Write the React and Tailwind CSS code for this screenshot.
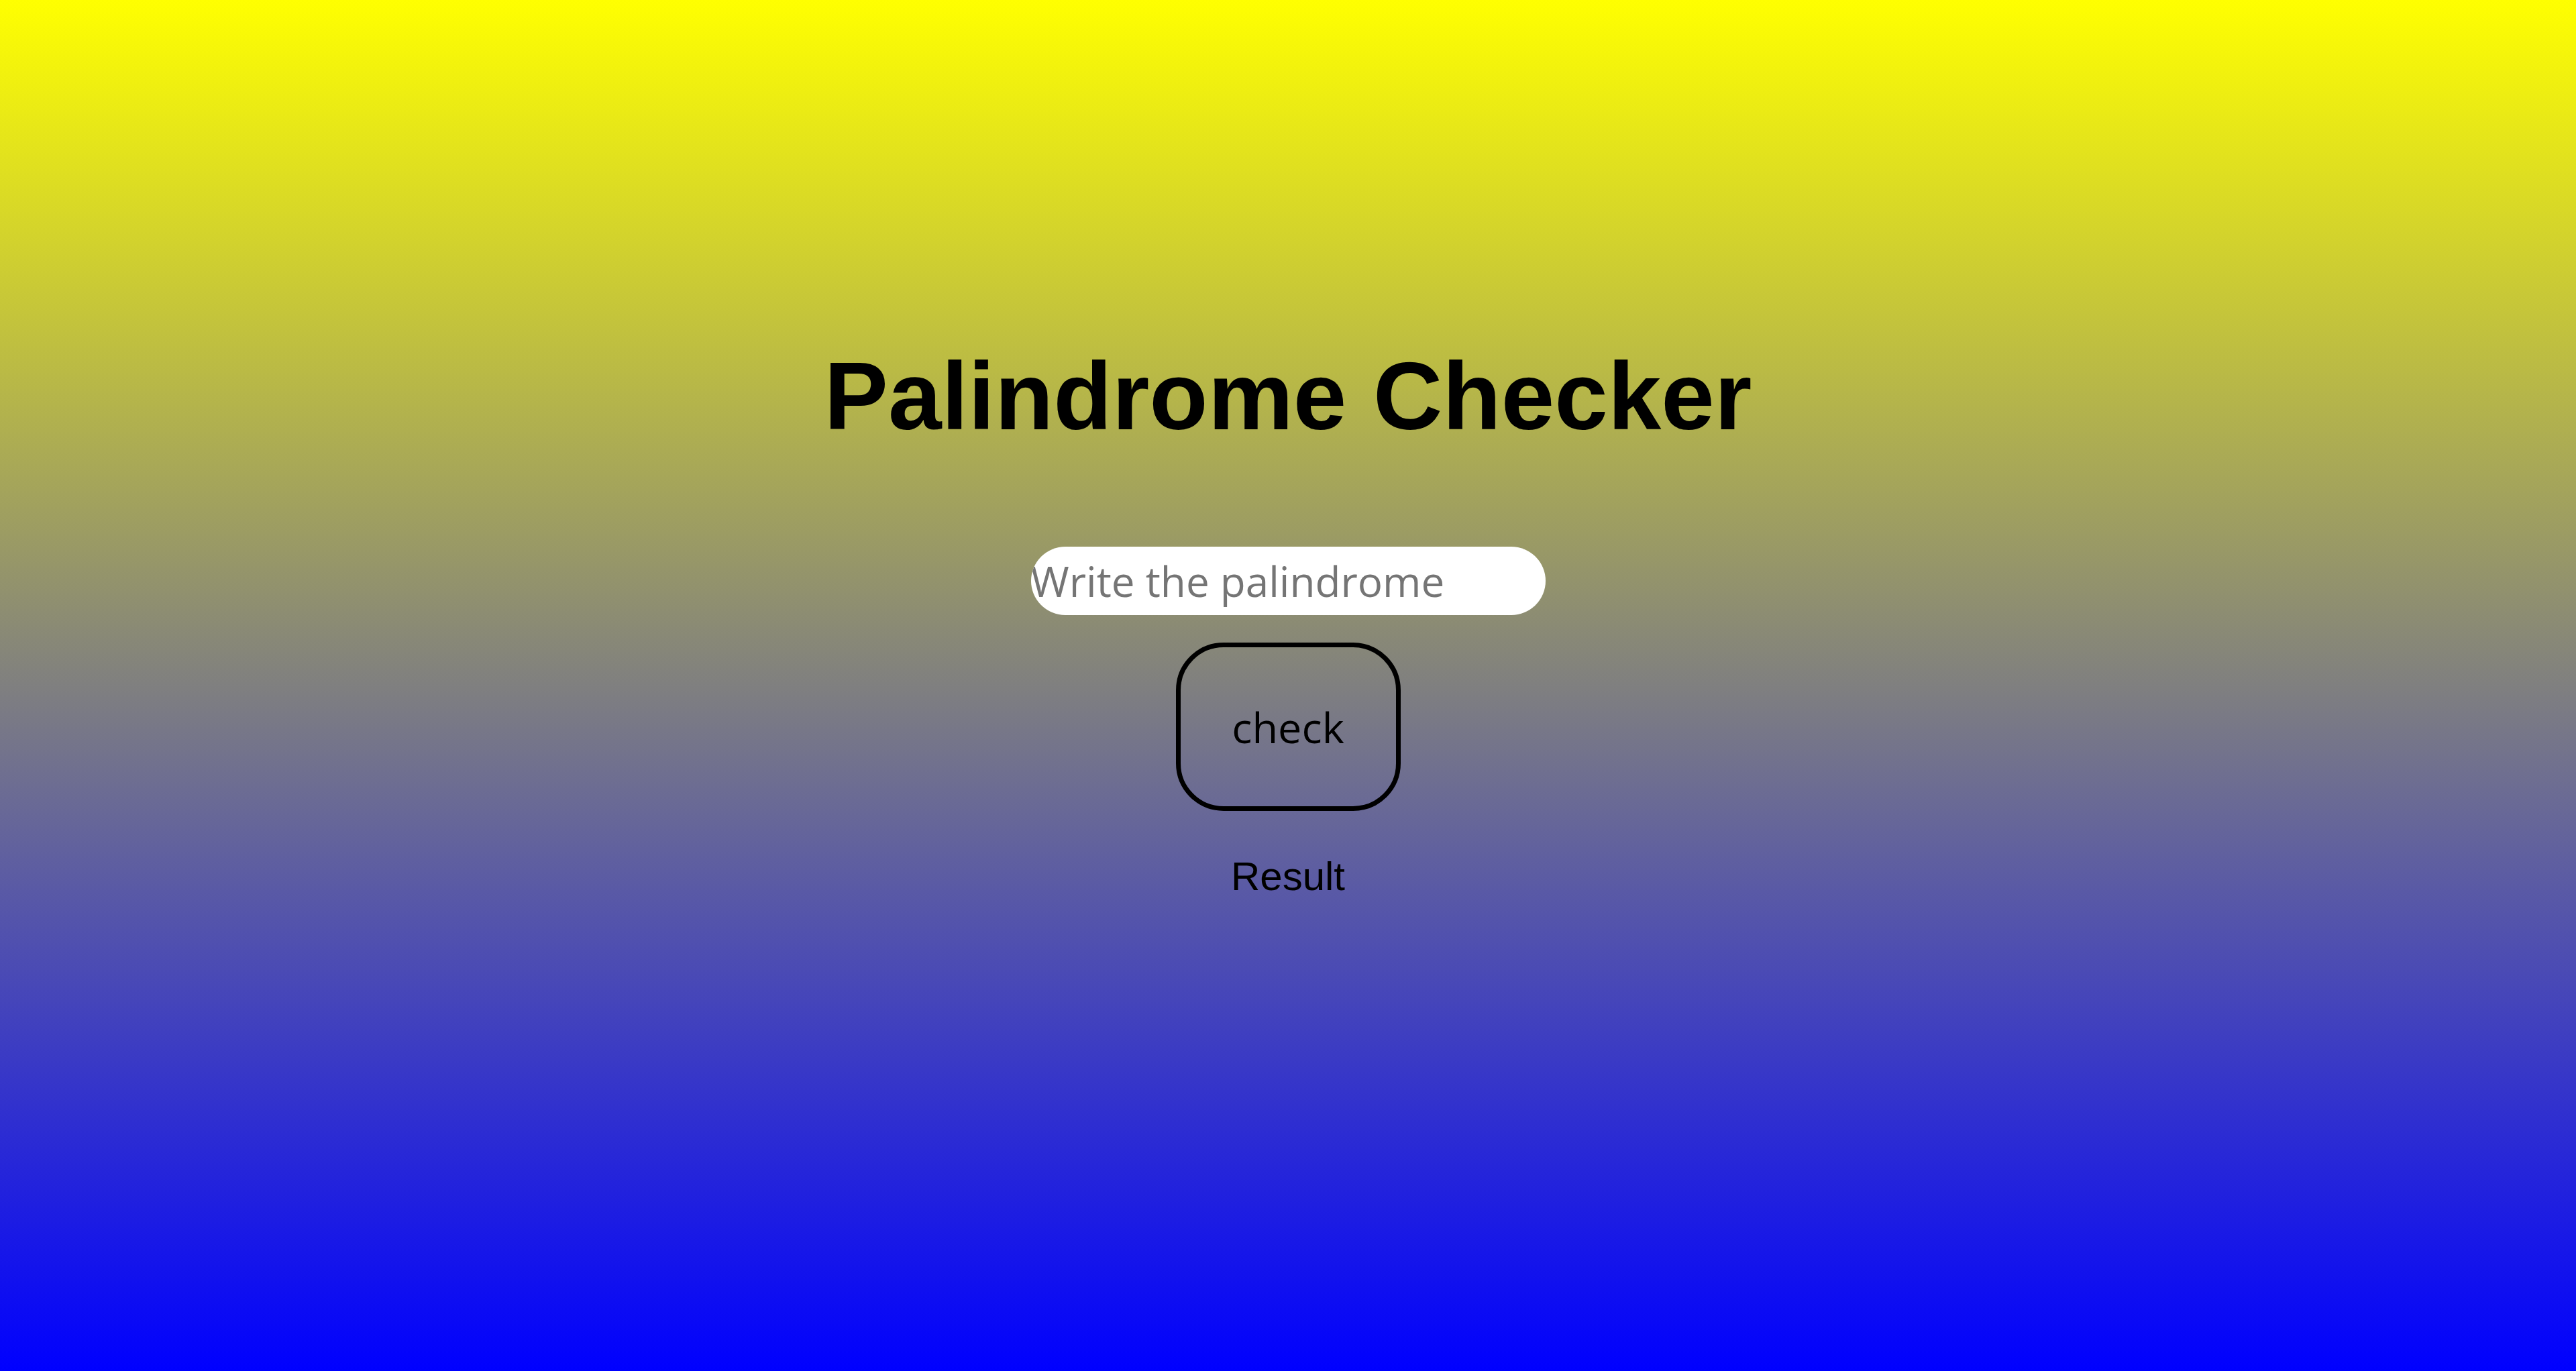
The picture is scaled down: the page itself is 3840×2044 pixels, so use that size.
import React from "react";

export default function App() {
  return (
    <div className="h-[2044px] w-full bg-[linear-gradient(#ffff00,#0000ff)] flex flex-col items-center pt-[509px]">
      <h1 className="m-0 text-[143px] leading-[1.15] font-bold text-black font-['Liberation_Sans',Arial,sans-serif]">
        Palindrome Checker
      </h1>
      <input
        type="text"
        placeholder="Write the palindrome"
        className="mt-[142px] w-[767px] h-[102px] rounded-[51px] bg-white p-0 border-0 outline-none text-[62px] text-black placeholder:text-[#757575] font-['Open_Sans',sans-serif]"
      />
      <button className="mt-[41px] w-[335px] h-[251px] rounded-[71px] border-[7px] border-black bg-transparent flex items-center justify-center text-[63px] text-black font-['Open_Sans',sans-serif] leading-[1.362]">
        check
      </button>
      <p className="mt-[63px] text-[60px] leading-[1.15] text-black font-['Liberation_Sans',Arial,sans-serif]">
        Result
      </p>
    </div>
  );
}
